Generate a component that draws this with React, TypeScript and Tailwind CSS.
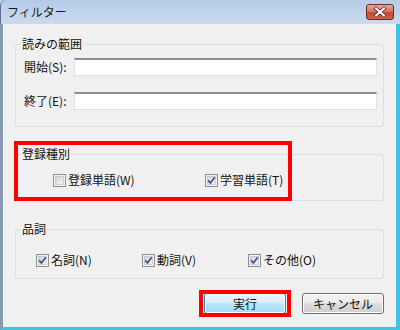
import { useId } from "react";

function CheckBox({ checked }: { checked: boolean }) {
  const id = useId();
  return (
    <svg width="13" height="13" viewBox="0 0 13 13" className="shrink-0">
      <defs>
        <linearGradient id={id} x1="0" y1="0" x2="1" y2="1">
          <stop offset="0" stopColor="#cdd1d7" />
          <stop offset="1" stopColor="#f7f7f7" />
        </linearGradient>
      </defs>
      <rect x="0.5" y="0.5" width="12" height="12" fill="#f4f4f4" stroke="#8e8f8f" />
      <rect x="2.5" y="2.5" width="8" height="8" fill={`url(#${id})`} stroke="#b4b8be" strokeWidth="0.6" />
      {checked && (
        <path d="M3.2 6.4 L5.4 9 L9.8 3.2" fill="none" stroke="#3a4f97" strokeWidth="1.7" strokeLinejoin="round" />
      )}
    </svg>
  );
}

function Check({ label, checked }: { label: string; checked: boolean }) {
  return (
    <div className="flex items-center gap-[2px] h-[16px]">
      <CheckBox checked={checked} />
      <span>{label}</span>
    </div>
  );
}

function CloseButton() {
  return (
    <svg width="28" height="16" viewBox="0 0 28 16">
      <defs>
        <linearGradient id="closeg" x1="0" y1="0" x2="0" y2="1">
          <stop offset="0" stopColor="#e8aa9f" />
          <stop offset="0.45" stopColor="#d67563" />
          <stop offset="0.55" stopColor="#c24a33" />
          <stop offset="1" stopColor="#cf6a45" />
        </linearGradient>
      </defs>
      <rect x="0.5" y="0.5" width="27" height="15" rx="2.5" fill="url(#closeg)" stroke="#6e2a20" />
      <path d="M10 4.5 L18 11.5 M18 4.5 L10 11.5" stroke="#5a2a24" strokeWidth="3.6" strokeLinecap="square" />
      <path d="M10 4.5 L18 11.5 M18 4.5 L10 11.5" stroke="#ffffff" strokeWidth="2" strokeLinecap="square" />
    </svg>
  );
}

function TextBox() {
  return (
    <div className="flex-1 h-[18px] bg-white border border-[#dde2e8] border-t-[#8c8f96] border-t-2 mr-[1px]" />
  );
}

export default function App() {
  return (
    <div className="relative w-[400px] h-[330px] flex flex-col bg-[#bcd1ea] text-[12px] leading-[16px] text-[#111] font-['Noto_Sans_CJK_JP','Liberation_Sans',sans-serif] overflow-hidden">
      <div className="h-[24px] flex items-center justify-between pl-[6px] pr-[6px] bg-linear-to-b from-[#b5cce7] to-[#c9dbef] border-l border-[#5f7190] rounded-tl-[6px] rounded-tr-[6px]">
        <span className="text-[12px] text-[#1a1a1a]">フィルター</span>
        <CloseButton />
      </div>

      <div className="flex-1 flex flex-col bg-[#f0f0f0] border-l-[3px] border-l-[#8798b0] border-r-[4px] border-r-[#3ec3e7] border-b-[3px] border-b-[#3ec3e7]">
        <fieldset className="mt-[12px] mx-[12px] border border-[#d5dfe5] rounded-[3px] px-[5px] pb-[16px]">
          <legend className="px-[1px]">読みの範囲</legend>
          <div className="mt-[6px] flex items-center h-[18px] pl-[3px]">
            <span className="w-[50px] shrink-0">開始(S):</span>
            <TextBox />
          </div>
          <div className="mt-[16px] flex items-center h-[18px] pl-[3px]">
            <span className="w-[50px] shrink-0">終了(E):</span>
            <TextBox />
          </div>
        </fieldset>

        <fieldset className="mt-[19px] mx-[12px] border border-[#d5dfe5] rounded-[3px] px-[5px] pb-[12px]">
          <legend className="px-[1px]">登録種別</legend>
          <div className="mt-[10px] flex pl-[32px]">
            <div className="w-[152px]">
              <Check label="登録単語(W)" checked={false} />
            </div>
            <Check label="学習単語(T)" checked={true} />
          </div>
        </fieldset>

        <fieldset className="mt-[20px] mx-[12px] border border-[#d5dfe5] rounded-[3px] px-[5px] pb-[10px]">
          <legend className="px-[1px]">品詞</legend>
          <div className="mt-[15px] flex pl-[15px]">
            <div className="w-[106px]">
              <Check label="名詞(N)" checked={true} />
            </div>
            <div className="w-[106px]">
              <Check label="動詞(V)" checked={true} />
            </div>
            <Check label="その他(O)" checked={true} />
          </div>
        </fieldset>

        <div className="mt-[14px] mr-[12px] flex justify-end gap-[16px]">
          <button className="w-[82px] h-[21px] rounded-[3px] border border-[#3c7fb1] shadow-[inset_0_0_0_1px_#f4fbff] bg-[linear-gradient(#eaf6fd_0%,#d9f0fc_45%,#bee6fd_50%,#a7d9f5_100%)] text-[12px] leading-[16px]">
            実行
          </button>
          <button className="w-[82px] h-[21px] rounded-[3px] border border-[#707070] shadow-[inset_0_0_0_1px_#fcfcfc] bg-[linear-gradient(#f2f2f2_0%,#ebebeb_50%,#dddddd_50%,#cfcfcf_100%)] text-[12px] leading-[16px]">
            キャンセル
          </button>
        </div>
      </div>

      <div className="absolute left-[14px] top-[141px] w-[278px] h-[60px] border-[4px] border-[#ff0000]" />
      <div className="absolute left-[199px] top-[290px] w-[92px] h-[27px] border-[4px] border-[#ff0000]" />
    </div>
  );
}
